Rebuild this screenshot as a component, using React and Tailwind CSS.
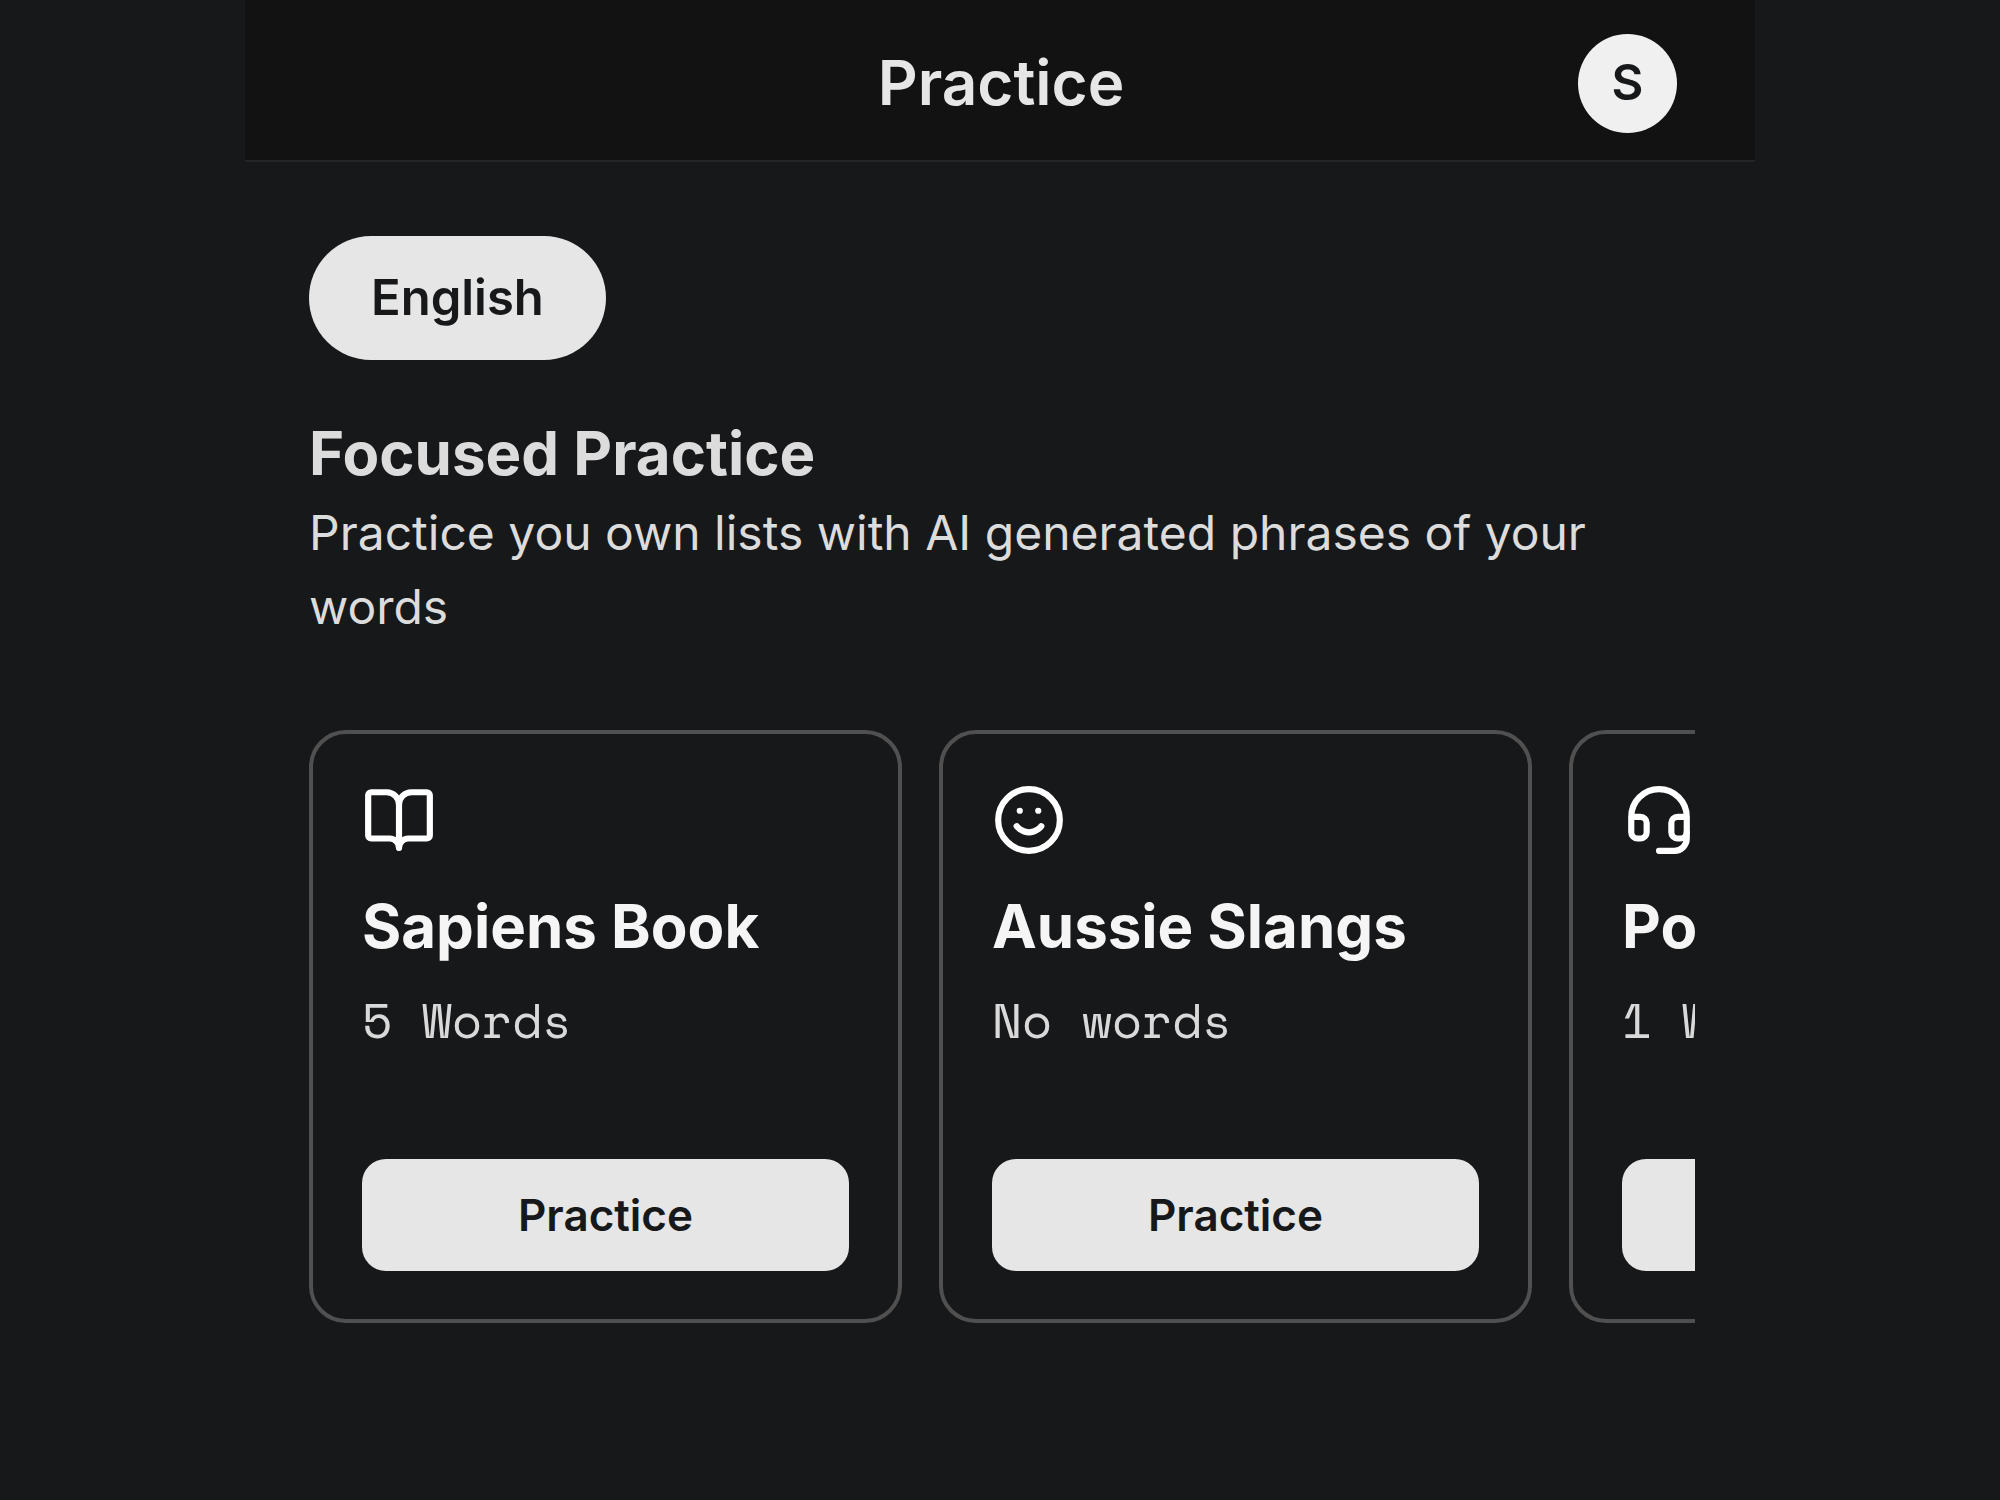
import React, { useState } from "react";
import { BookOpen, Smile, Headset } from "lucide-react";

const lists = [
  { id: 1, title: "Sapiens Book", words: 5, Icon: BookOpen },
  { id: 2, title: "Aussie Slangs", words: 0, Icon: Smile },
  { id: 3, title: "Podcasts", words: 1, Icon: Headset },
];

const wordsLabel = (count) => {
  if (count === 0) return "No words";
  return count === 1 ? "1 Word" : `${count} Words`;
};

function Header() {
  return (
    <header className="grid grid-cols-3 items-center h-[162px] pt-1.5 pl-20 pr-[78px] bg-[#121212] border-b-2 border-[#242527]">
      <h1 className="col-start-2 text-center text-[62px] leading-[74px] font-semibold text-[#e6e6e6]">
        Practice
      </h1>
      <button
        type="button"
        aria-label="Account"
        className="justify-self-end flex items-center justify-center size-[99px] rounded-full bg-[#f0f0f0] text-[49px] leading-[74px] font-semibold text-[#17181a]"
      >
        S
      </button>
    </header>
  );
}

function ListCard({ title, words, Icon }) {
  return (
    <article className="flex flex-col shrink-0 w-[593px] h-[593px] px-[49px] pt-[49px] pb-12 rounded-[37px] border-4 border-[#505050]">
      <Icon size={74} className="text-white" />
      <h3 className="mt-8 text-[60px] leading-[74px] font-bold text-[#f5f5f5] whitespace-nowrap">
        {title}
      </h3>
      <p className="mt-5 font-['Space_Mono','Liberation_Mono',monospace] text-[49px] leading-[74px] text-[#d9d9d9] whitespace-nowrap">
        {wordsLabel(words)}
      </p>
      <button
        type="button"
        className="mt-auto w-full h-28 rounded-3xl bg-[#e6e6e6] text-[44px] font-semibold text-[#17181a]"
      >
        Practice
      </button>
    </article>
  );
}

export default function App() {
  const [language] = useState("English");

  return (
    <div className="min-h-screen bg-[#17181a] font-['Inter',sans-serif]">
      <div className="mx-auto max-w-[1510px]">
        <Header />
        <main className="pl-16 pr-[60px] pt-[74px] pb-16">
          <button
            type="button"
            className="h-[124px] px-[62px] rounded-full bg-[#e6e6e6] text-[49px] font-semibold text-[#17181a]"
          >
            {language}
          </button>

          <section className="mt-14">
            <h2 className="text-[60px] leading-[74px] font-bold text-[#dcdcdc]">
              Focused Practice
            </h2>
            <p className="mt-1.5 text-[48px] leading-[74px] text-[#dcdcdc]">
              Practice you own lists with AI generated phrases of your words
            </p>

            <div className="flex gap-[37px] mt-[86px] overflow-hidden">
              {lists.map((list) => (
                <ListCard key={list.id} {...list} />
              ))}
            </div>
          </section>
        </main>
      </div>
    </div>
  );
}
